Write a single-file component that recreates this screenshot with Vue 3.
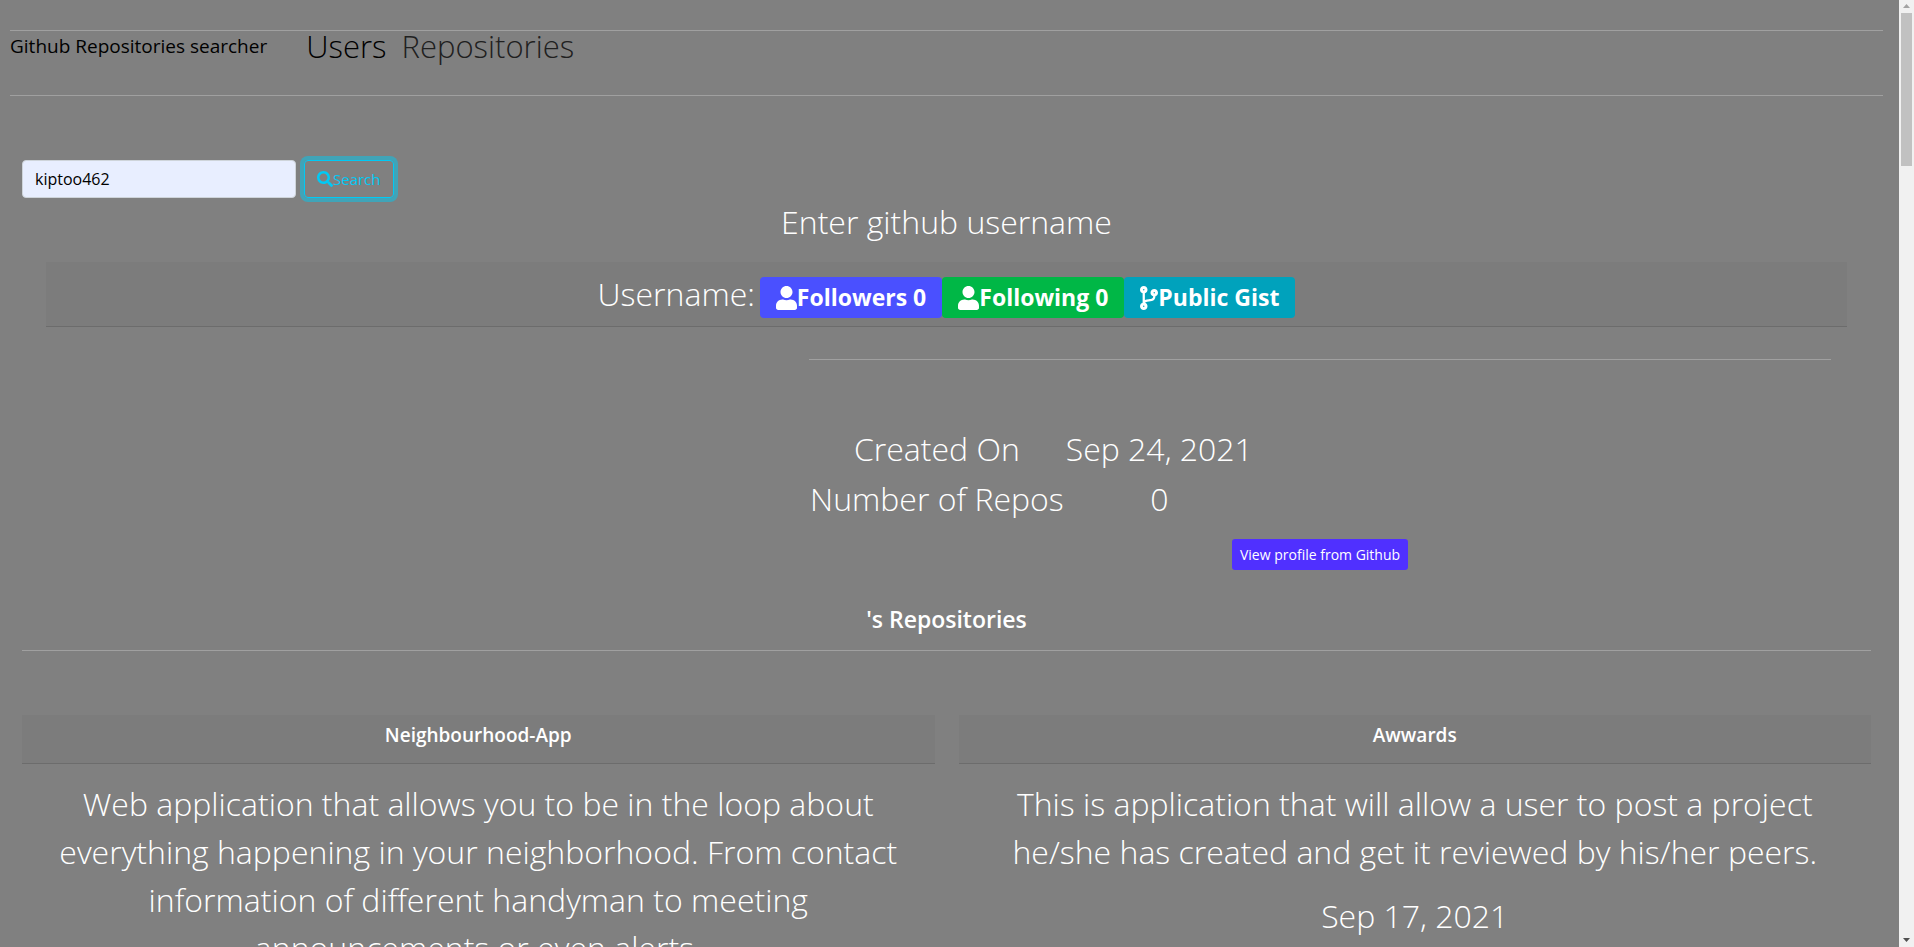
<script setup>
import { ref } from 'vue'

const username = ref('kiptoo462')

const icons = {
  user: {
    box: '0 0 448 512',
    path: 'M224 256c70.7 0 128-57.3 128-128S294.7 0 224 0 96 57.3 96 128s57.3 128 128 128zm89.6 32h-16.7c-22.2 10.2-46.9 16-72.9 16s-50.6-5.8-72.9-16h-16.7C60.2 288 0 348.2 0 422.4V464c0 26.5 21.5 48 48 48h352c26.5 0 48-21.5 48-48v-41.6c0-74.2-60.2-134.4-134.4-134.4z',
  },
  branch: {
    box: '0 0 384 512',
    path: 'M384 144c0-44.2-35.8-80-80-80s-80 35.8-80 80c0 36.4 24.3 67.1 57.5 76.8-.6 16.1-4.2 28.5-11 36.9-15.4 19.2-49.3 22.4-85.2 25.7-28.2 2.6-57.4 5.4-81.3 16.9v-144c32.5-10.2 56-40.5 56-76.3 0-44.2-35.8-80-80-80S0 35.8 0 80c0 35.8 23.5 66.1 56 76.3v199.3C23.5 365.9 0 396.2 0 432c0 44.2 35.8 80 80 80s80-35.8 80-80c0-34-21.2-63.1-51.2-74.6 3.1-5.2 7.8-9.8 14.9-13.4 16.2-8.2 40.4-10.4 66.1-12.8 42.2-3.9 90-8.4 118.2-43.4 14-17.4 21.1-39.8 21.6-67.9 31.6-10.8 54.4-40.7 54.4-75.9zM80 64c8.8 0 16 7.2 16 16s-7.2 16-16 16-16-7.2-16-16 7.2-16 16-16zm0 384c-8.8 0-16-7.2-16-16s7.2-16 16-16 16 7.2 16 16-7.2 16-16 16zm224-320c8.8 0 16 7.2 16 16s-7.2 16-16 16-16-7.2-16-16 7.2-16 16-16z',
  },
}

const badges = [
  { label: 'Followers 0', icon: icons.user, tone: 'blue' },
  { label: 'Following 0', icon: icons.user, tone: 'green' },
  { label: 'Public Gist', icon: icons.branch, tone: 'teal' },
]

const repositories = [
  {
    name: 'Neighbourhood-App',
    about:
      'Web application that allows you to be in the loop about everything happening in your neighborhood. From contact information of different handyman to meeting announcements or even alerts.',
  },
  {
    name: 'Awwards',
    about:
      'This is application that will allow a user to post a project he/she has created and get it reviewed by his/her peers.',
    date: 'Sep 17, 2021',
  },
]
</script>

<template>
  <div class="window">
    <div class="page">
      <header class="top">
        <nav class="navbar">
          <a class="brand" href="#">Github Repositories searcher</a>
          <a class="link active" href="#users">Users</a>
          <a class="link" href="#repositories">Repositories</a>
        </nav>
      </header>

      <main>
        <form class="search" @submit.prevent>
          <input v-model="username" class="field" type="text" aria-label="Github username" />
          <button class="go" type="submit">
            <svg viewBox="0 0 512 512" aria-hidden="true">
              <path
                d="M505 442.7L405.3 343c-4.5-4.5-10.6-7-17-7H372c27.6-35.3 44-79.7 44-128C416 93.1 322.9 0 208 0S0 93.1 0 208s93.1 208 208 208c48.3 0 92.7-16.4 128-44v16.3c0 6.4 2.5 12.5 7 17l99.7 99.7c9.4 9.4 24.6 9.4 33.9 0l28.3-28.3c9.4-9.4 9.4-24.6.1-34zM208 336c-70.7 0-128-57.2-128-128 0-70.7 57.2-128 128-128 70.7 0 128 57.2 128 128 0 70.7-57.2 128-128 128z"
              />
            </svg>
            <span>Search</span>
          </button>
        </form>

        <p class="hint">Enter github username</p>

        <section class="profile">
          <div class="card-header profile-header">
            <span>Username:</span>
            <div class="badges">
              <span v-for="b in badges" :key="b.label" class="badge" :class="b.tone">
                <svg :viewBox="b.icon.box" aria-hidden="true"><path :d="b.icon.path" /></svg>
                <span>{{ b.label }}</span>
              </span>
            </div>
          </div>
          <div class="profile-body">
            <div class="details">
              <table>
                <tbody>
                  <tr>
                    <th scope="row">Created On</th>
                    <td>Sep 24, 2021</td>
                  </tr>
                  <tr>
                    <th scope="row">Number of Repos</th>
                    <td>0</td>
                  </tr>
                </tbody>
              </table>
              <a class="view" href="#profile">View profile from Github</a>
            </div>
          </div>
        </section>

        <h4 class="title">'s Repositories</h4>

        <section class="repos">
          <article v-for="r in repositories" :key="r.name">
            <div class="card-header">
              <h5>{{ r.name }}</h5>
            </div>
            <div class="card-body">
              <p>{{ r.about }}</p>
              <p v-if="r.date">{{ r.date }}</p>
            </div>
          </article>
        </section>
      </main>
    </div>

    <div class="scrollbar" aria-hidden="true">
      <svg viewBox="0 0 15 13"><path class="up" d="M4 8h7L7.5 4z" /></svg>
      <div class="thumb"></div>
      <svg viewBox="0 0 15 13"><path class="down" d="M4 4h7L7.5 8z" /></svg>
    </div>
  </div>
</template>

<style>
body {
  background: #808080;
}
</style>

<style scoped>
.window {
  display: flex;
  height: 100vh;
  overflow: hidden;
  background: #808080;
  color: #fff;
  font-family: "Open Sans", "Noto Sans", sans-serif;
  font-size: 32px;
  font-weight: 300;
  line-height: 48px;
}
.window * {
  box-sizing: border-box;
}
.page {
  flex: 1;
  min-width: 0;
  overflow: hidden;
}
p,
h4,
h5 {
  margin: 0;
}
.top {
  margin: 30px 16px 0 10px;
  border-top: 1px solid #a0a0a0;
  border-bottom: 1px solid #a0a0a0;
}
.navbar {
  display: flex;
  height: 64px;
  line-height: 30px;
}
.navbar a {
  text-decoration: none;
}
.brand {
  margin-right: 39px;
  color: #000;
  font-size: 19px;
  font-weight: 400;
}
.link {
  margin-right: 15px;
  color: #202020;
  font-size: 31px;
}
.link.active {
  color: #000;
}
main {
  padding: 64px 28px 0 22px;
}
.search {
  display: flex;
  gap: 8px;
  height: 38px;
}
.field {
  width: 274px;
  padding: 6px 12px;
  border: 1px solid #ced4da;
  border-radius: 4px;
  background: #e8eeff;
  color: #000;
  font: 400 16px/24px "Open Sans", "Noto Sans", sans-serif;
}
.go {
  display: flex;
  align-items: center;
  padding: 6px 12px;
  border: 1px solid #00caf5;
  border-radius: 4px;
  background: none;
  box-shadow: 0 0 0 4px #40a4b8;
  color: #00caf5;
  font: 400 15px/24px "Open Sans", "Noto Sans", sans-serif;
}
.go svg {
  width: 16px;
  height: 16px;
  fill: currentColor;
}
.hint {
  text-align: center;
}
.profile {
  margin: 16px 24px 0;
}
.card-header {
  padding: 8px 16px;
  border-bottom: 1px solid #6c6c6c;
  background: #7c7c7c;
  text-align: center;
}
.profile-header {
  display: flex;
  justify-content: center;
  align-items: flex-end;
  gap: 5px;
}
.badges {
  display: flex;
}
.badge {
  display: flex;
  align-items: center;
  height: 41px;
  padding: 0 16px;
  border-radius: 4px;
  font-size: 23px;
  font-weight: 700;
  line-height: 24px;
}
.badge svg {
  height: 24px;
  fill: currentColor;
}
.badge span {
  padding-bottom: 2px;
}
.blue {
  background: #4a50ff;
}
.green {
  background: #00b746;
}
.teal {
  background: #00a2bc;
}
.profile-body {
  display: grid;
  grid-template-columns: 5fr 7fr;
  padding: 32px 4px;
}
.details {
  grid-column: 2;
  margin: 0 12px;
  border-top: 1px solid #a0a0a0;
  padding-top: 64px;
  text-align: center;
}
table {
  border-collapse: collapse;
}
th,
td {
  padding: 1px;
  font-weight: 300;
  text-align: center;
}
.view {
  display: block;
  width: fit-content;
  margin: 15px auto 0;
  padding: 5px 8px;
  border-radius: 3px;
  background: #5030ff;
  color: #fff;
  font-size: 14px;
  font-weight: 400;
  line-height: 21px;
  text-decoration: none;
}
.title {
  padding: 3px 0 16px;
  border-bottom: 1px solid #a0a0a0;
  font-size: 23px;
  font-weight: 600;
  line-height: 29px;
  text-align: center;
}
.repos {
  display: grid;
  grid-template-columns: 1fr 1fr;
  gap: 24px;
  margin-top: 64px;
}
h5 {
  padding-bottom: 8px;
  font-size: 19px;
  font-weight: 600;
  line-height: 24px;
}
.card-body {
  padding: 16px;
  text-align: center;
}
.card-body p {
  margin-bottom: 16px;
}
.scrollbar {
  display: flex;
  flex-direction: column;
  width: 15px;
  background: #f1f1f1;
}
.scrollbar svg {
  width: 15px;
  height: 13px;
  flex: none;
}
.up {
  fill: #a3a3a3;
}
.down {
  fill: #505050;
}
.thumb {
  height: 153px;
  margin: 0 2px auto;
  background: #c1c1c1;
}
</style>
